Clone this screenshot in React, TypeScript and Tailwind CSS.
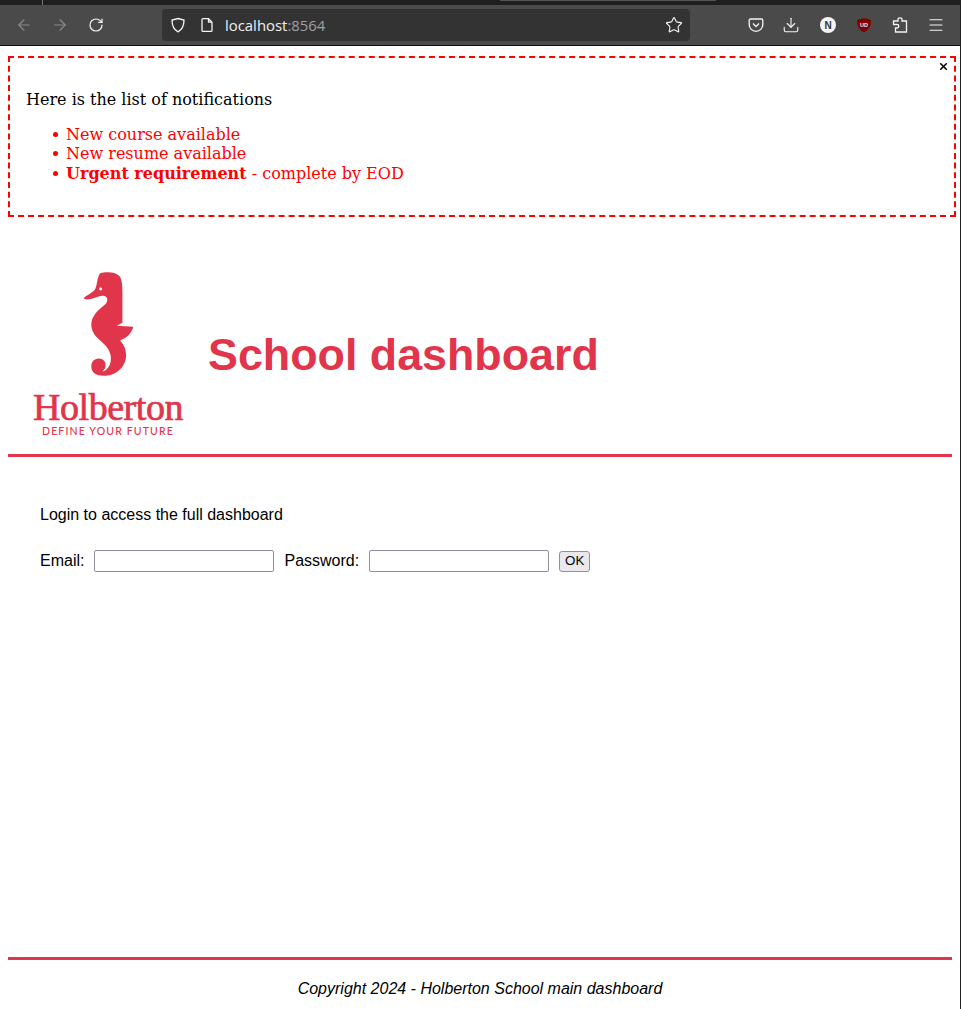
import { ArrowLeft, ArrowRight, RotateCw, Star, Download, Menu, X } from "lucide-react";

function Seahorse() {
  return (
    <svg viewBox="185 35 160 320" className="w-[53px] h-[107px] block">
      <path
        fill="#e1354b"
        d="M240 40 C255 36 285 34 297 48 C306 58 307 75 307 100 L307 190 L290 199 L340 202 C335 222 320 236 300 243 C314 258 319 275 318 292 C316 325 285 350 250 350 C228 350 213 340 213 322 C213 307 224 298 236 298 C250 298 259 310 256 322 C254 330 250 334 246 337 C262 334 274 316 272 292 C270 272 256 256 240 243 C224 230 213 214 213 195 C213 170 235 150 252 137 C262 129 264 118 258 112 C250 104 235 110 222 115 C210 120 195 121 190 116 C198 106 218 100 225 88 C232 72 230 52 240 40 Z"
      />
      <circle cx="241" cy="88" r="4.5" fill="#fff" />
    </svg>
  );
}

function Logo() {
  return (
    <div className="w-[200px] h-[200px] flex flex-col items-center pt-[17px] shrink-0">
      <Seahorse />
      <div className="mt-[11px] font-['Liberation_Serif',serif] text-[38px] leading-[36px] text-[#e1354b] tracking-[-0.45px] [-webkit-text-stroke:0.7px_#e1354b]">
        Holberton
      </div>
      <div className="font-['Lato',sans-serif] font-medium text-[10.5px] leading-[12px] text-[#e1354b] tracking-[1.15px]">
        DEFINE YOUR FUTURE
      </div>
    </div>
  );
}

function Toolbar() {
  return (
    <div className="h-[46px] flex flex-col font-['Liberation_Sans',sans-serif]">
      <div className="h-[5px] shrink-0 bg-[#1f1f1f] flex">
        <div className="ml-[42px] w-px h-[5px] bg-[#777]" />
        <div className="ml-[457px] w-[216px] h-px bg-[#555]" />
      </div>
      <div className="flex-1 bg-[#4a4a4a] border-b border-[#0c0c0c] flex items-center text-[#f4f4f4]">
        <div className="w-[162px] flex items-center shrink-0 pl-[15px] gap-[18px]">
          <ArrowLeft size={18} strokeWidth={1.5} className="text-[#8a8a8a]" />
          <ArrowRight size={18} strokeWidth={1.5} className="text-[#8a8a8a]" />
          <RotateCw size={16} strokeWidth={1.8} className="ml-px" />
        </div>
        <div className="w-[528px] h-[32px] rounded-[4px] bg-[#333333] flex items-center pl-[8px] pr-[7px]">
          <svg viewBox="0 0 16 16" className="w-[16px] h-[16px] fill-none stroke-[#f4f4f4] stroke-[1.3]">
            <path d="M8 1.5 L14 3 C14 9 12.5 12.5 8 14.8 C3.5 12.5 2 9 2 3 Z" />
          </svg>
          <svg viewBox="0 0 16 16" className="ml-[13px] w-[16px] h-[16px] fill-none stroke-[#f4f4f4] stroke-[1.3]">
            <path d="M3 2.5 C3 2 3.4 1.7 4 1.7 L9.5 1.7 L13 5.2 L13 13.5 C13 14 12.6 14.4 12 14.4 L4 14.4 C3.4 14.4 3 14 3 13.5 Z" />
            <path d="M9.5 1.7 L9.5 5.2 L13 5.2" />
          </svg>
          <span className="ml-[10px] text-[14.9px] font-['Open_Sans',sans-serif] text-[#f0f0f0]">
            localhost<span className="text-[#a0a0a0]">:8564</span>
          </span>
          <Star size={18} strokeWidth={1.5} className="ml-auto" />
        </div>
        <div className="flex-1 flex items-center pl-[58px] gap-[20px]">
          <svg viewBox="0 0 16 16" className="w-[16px] h-[16px] fill-none stroke-[#f4f4f4] stroke-[1.3]">
            <path d="M2.5 2 L13.5 2 C14.3 2 14.8 2.5 14.8 3.3 L14.8 7.5 C14.8 11.5 11.8 14.3 8 14.3 C4.2 14.3 1.2 11.5 1.2 7.5 L1.2 3.3 C1.2 2.5 1.7 2 2.5 2 Z" />
            <path d="M5 6.5 L8 9.5 L11 6.5" />
          </svg>
          <Download size={18} strokeWidth={1.5} className="-ml-[2px]" />
          <div className="w-[16px] h-[16px] rounded-full bg-[#f4f4f4] text-[#333] text-[10px] font-bold flex items-center justify-center">
            N
          </div>
          <svg viewBox="0 0 16 16" className="w-[16px] h-[16px]">
            <path d="M8 1 L15 3 C15 9 13 13 8 15.5 C3 13 1 9 1 3 Z" fill="#800000" />
            <text x="8" y="9.5" textAnchor="middle" fontSize="5.5" fontWeight="700" fill="#eee" fontFamily="Liberation Sans">
              UD
            </text>
          </svg>
          <svg viewBox="0 0 16 16" className="w-[16px] h-[16px] fill-none stroke-[#f4f4f4] stroke-[1.3]">
            <path d="M6 2.5 C6 1.5 7 .8 8 .8 C9 .8 10 1.5 10 2.5 L10 4 L14.5 4 L14.5 15 L3.5 15 L3.5 11 L5 11 C6 11 6.8 10.2 6.8 9.3 C6.8 8.3 6 7.5 5 7.5 L1.5 7.5 L1.5 4 L6 4 Z" />
          </svg>
          <Menu size={18} strokeWidth={1.4} className="-ml-[1px]" />
        </div>
      </div>
    </div>
  );
}

function NotificationItem({ children, className }: { children: React.ReactNode; className?: string }) {
  return (
    <li
      className={`relative before:content-[''] before:absolute before:left-[-13px] before:top-[7px] before:w-[5px] before:h-[5px] before:rounded-full before:bg-[#ff0000] ${className ?? ""}`}
    >
      {children}
    </li>
  );
}

export default function App() {
  return (
    <div className="min-h-[1009px] bg-white border-r border-[#222] flex flex-col overflow-hidden">
      <Toolbar />
      <div className="px-2 pt-[10px] flex flex-col flex-1">
        <div className="relative w-[948px] h-[161px] border-2 border-dashed border-[#ff0000] pl-[16px] pt-[32px] font-['DejaVu_Serif','Liberation_Serif',serif] text-[16px] leading-[19px] text-black">
          <button className="absolute right-[5px] top-[3px] text-black">
            <X size={11} strokeWidth={3.5} />
          </button>
          <p>Here is the list of notifications</p>
          <ul className="pl-[40px] mt-[16px] text-[#ff0000]">
            <NotificationItem>New course available</NotificationItem>
            <NotificationItem>New resume available</NotificationItem>
            <NotificationItem className="mt-px">
              <strong className="font-bold">Urgent requirement</strong> - complete by EOD
            </NotificationItem>
          </ul>
        </div>
        <header className="mt-[37px] w-[944px] h-[203px] border-b-[3px] border-[#e1354b] flex items-center font-['Liberation_Sans',sans-serif]">
          <Logo />
          <h1 className="pt-[2px] text-[44.8px] font-bold text-[#e1354b]">School dashboard</h1>
        </header>
        <main className="flex-1 w-[944px] px-[32px] pt-[49px] font-['Liberation_Sans',sans-serif] text-[16px] leading-[18px] text-black">
          <p>Login to access the full dashboard</p>
          <div className="mt-[26px] flex items-center h-[22px]">
            <label>Email:</label>
            <input className="ml-[10px] w-[180px] h-[22px] border border-[#8f8f9d] rounded-[2px] bg-white" />
            <label className="ml-[10px]">Password:</label>
            <input className="ml-[10px] w-[180px] h-[22px] border border-[#8f8f9d] rounded-[2px] bg-white" />
            <button className="ml-[10px] w-[31px] h-[21px] border border-[#8f8f9d] rounded-[3px] bg-[#e9e9ed] text-[13.33px] leading-none">
              OK
            </button>
          </div>
        </main>
        <footer className="w-[944px] h-[52px] border-t-[3px] border-[#e1354b] pt-[20px] text-center italic font-['Liberation_Sans',sans-serif] text-[16px] leading-[18px] text-black">
          Copyright 2024 - Holberton School main dashboard
        </footer>
      </div>
    </div>
  );
}
